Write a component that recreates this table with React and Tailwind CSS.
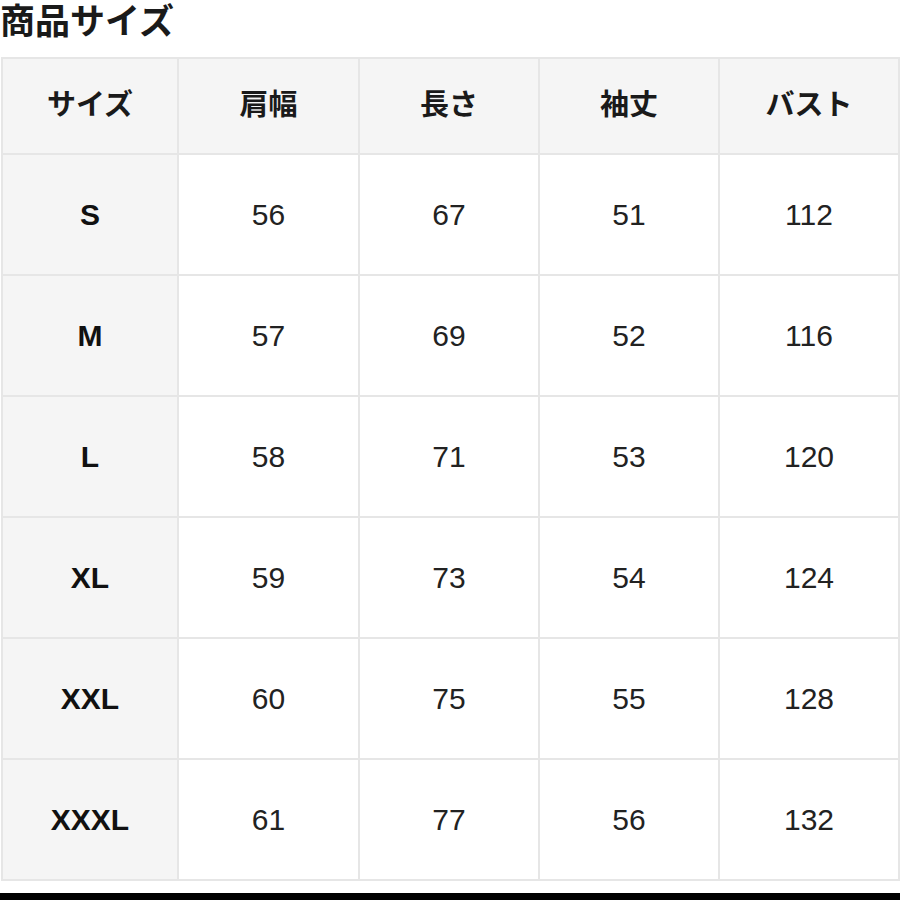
const HEADERS = ['サイズ', '肩幅', '長さ', '袖丈', 'バスト']

const ROWS = [
  ['S', 56, 67, 51, 112],
  ['M', 57, 69, 52, 116],
  ['L', 58, 71, 53, 120],
  ['XL', 59, 73, 54, 124],
  ['XXL', 60, 75, 55, 128],
  ['XXXL', 61, 77, 56, 132],
]

const font = { fontFamily: '"Liberation Sans", "Noto Sans CJK JP", sans-serif' }

export default function App() {
  return (
    <div className="w-[900px] h-[900px] bg-white flex flex-col overflow-hidden" style={font}>
      <h1 className="h-[44px] pt-[1px] text-[35px] leading-[42px] font-bold text-[#1a1a1a]">
        商品サイズ
      </h1>
      <div className="mt-[13px] ml-[1px]">
        <table className="w-[897px] table-fixed border-collapse">
          <colgroup>
            <col className="w-[176px]" />
            <col className="w-[181px]" />
            <col className="w-[180px]" />
            <col className="w-[180px]" />
            <col className="w-[180px]" />
          </colgroup>
          <thead>
            <tr className="h-[96px] bg-[#f5f5f5]">
              {HEADERS.map((h) => (
                <th
                  key={h}
                  className="border-2 border-[#e6e6e6] text-[29px] font-bold text-[#1a1a1a] text-center align-middle"
                >
                  {h}
                </th>
              ))}
            </tr>
          </thead>
          <tbody>
            {ROWS.map((row) => (
              <tr key={row[0]} className="h-[121px]">
                {row.map((v, i) => (
                  <td
                    key={i}
                    className={
                      i === 0
                        ? 'border-2 border-[#e6e6e6] bg-[#f5f5f5] text-[30px] font-bold text-[#111] text-center align-middle'
                        : 'border-2 border-[#e6e6e6] bg-white text-[30px] text-[#222] text-center align-middle'
                    }
                  >
                    {v}
                  </td>
                ))}
              </tr>
            ))}
          </tbody>
        </table>
      </div>
      <div className="mt-auto h-[7px] bg-black" />
    </div>
  )
}
